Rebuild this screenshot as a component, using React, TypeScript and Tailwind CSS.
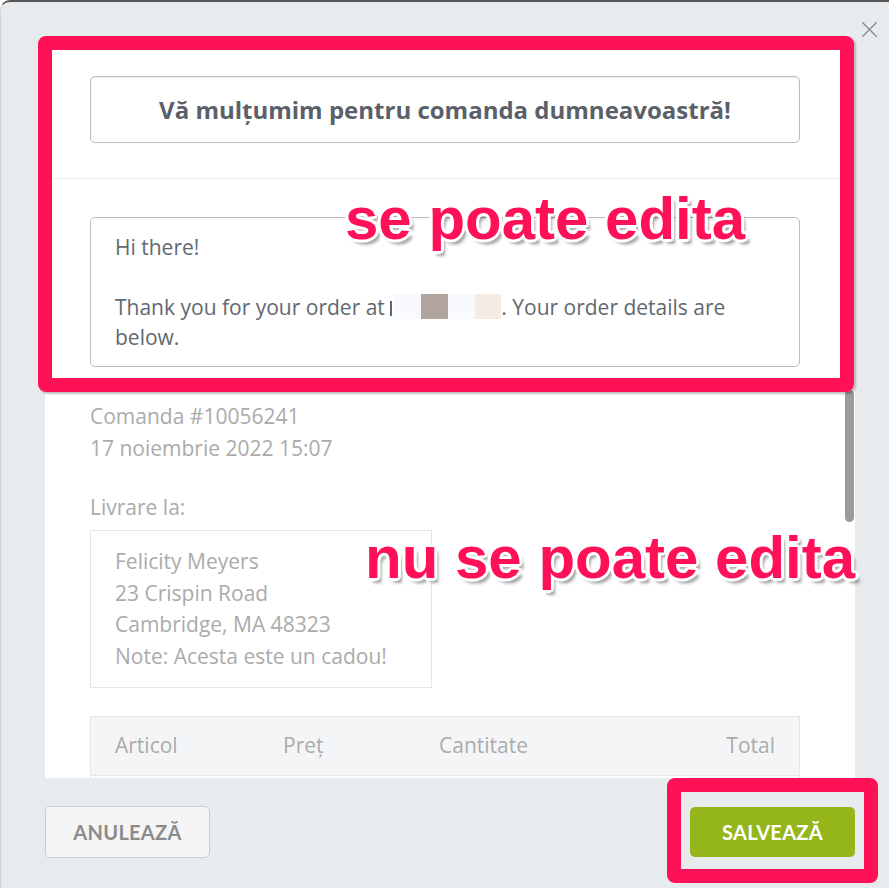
import { X } from 'lucide-react'

const outline =
  '[text-shadow:0_0_1px_#fff,3px_0_0_#fff,-3px_0_0_#fff,0_3px_0_#fff,0_-3px_0_#fff,2px_2px_0_#fff,-2px_2px_0_#fff,2px_-2px_0_#fff,-2px_-2px_0_#fff,4px_5px_3px_rgba(0,0,0,0.35)]'

export default function App() {
  return (
    <div className="w-[889px] h-[888px] bg-white overflow-hidden">
      <div className="relative h-full rounded-tl-[10px] border-t-2 border-l border-t-[#555] border-l-[#cfd3d7] bg-[#e8ebee] pt-[43px] font-['Open_Sans',sans-serif]">
        <button className="absolute right-[6px] top-[14px] text-[#8a8a8a]">
          <X size={27} strokeWidth={1.2} />
        </button>

        {/* scrollable body */}
        <div className="ml-[44px] w-[810px] h-[733px] bg-white flex overflow-hidden">
          <div className="flex-1">
            <div className="px-[45px] pt-[31px] pb-[35px] border-b border-[#ececec]">
              <div className="h-[67px] rounded-[5px] border border-[#bdbdbd] shadow-[inset_0_1px_2px_rgba(0,0,0,0.08)] flex items-center justify-center text-[24px] font-bold text-[#5a6069]">
                Vă mulțumim pentru comanda dumneavoastră!
              </div>
            </div>

            <div className="px-[45px] pt-[38px]">
              <div className="h-[150px] rounded-[5px] border border-[#bdbdbd] px-[24px] pt-[14px] text-[21px] leading-[30px] text-[#626870]">
                <p>Hi there!</p>
                <p>&nbsp;</p>
                <p>
                  Thank you for your order at{' '}
                  <span className="inline-block w-[2px] h-[15px] mr-[1px] align-[-1px] bg-[#626870]" />
                  <span className="inline-block w-[28px] h-[25px] align-[-4px] bg-[#f8fafd]" />
                  <span className="inline-block w-[27px] h-[25px] align-[-4px] bg-[#b2a59e]" />
                  <span className="inline-block w-[27px] h-[25px] align-[-4px] bg-[#f8fafd]" />
                  <span className="inline-block w-[26px] h-[25px] align-[-4px] bg-[#f4ebe5]" />. Your order
                  details are below.
                </p>
              </div>

              <div className="mt-[33px] text-[21px] leading-[32px] text-[#ababab]">
                <p>Comanda #10056241</p>
                <p>17 noiembrie 2022 15:07</p>
                <p className="mt-[27px]">Livrare la:</p>
              </div>

              <div className="mt-[7px] w-[342px] border border-[#e6e6e6] px-[24px] pt-[15px] pb-[14px] text-[21px] leading-[31.7px] text-[#ababab]">
                <p>Felicity Meyers</p>
                <p>23 Crispin Road</p>
                <p>Cambridge, MA 48323</p>
                <p>Note: Acesta este un cadou!</p>
              </div>

              <div className="mt-[28px] border border-[#e6e6e6] text-[21px] text-[#ababab]">
                <div className="h-[59px] bg-[#f4f5f7] border-b border-[#e6e6e6] flex items-center pl-[24px] pr-[24px]">
                  <div className="w-[168px]">Articol</div>
                  <div className="w-[156px]">Preț</div>
                  <div className="flex-1">Cantitate</div>
                  <div>Total</div>
                </div>
                <div className="h-[60px]" />
              </div>
            </div>
          </div>
          <div className="w-[10px] shrink-0">
            <div className="mt-[345px] h-[132px] w-[9px] rounded-full bg-[#9b9b9b]" />
          </div>
        </div>

        {/* footer */}
        <div className="mt-[28px] pl-[44px] pr-[34px] flex items-center justify-between font-['Lato',sans-serif]">
          <button className="w-[165px] h-[52px] rounded-[5px] border border-[#cccccc] bg-[#f5f5f5] text-[20px] font-bold text-[#8b8b8b] tracking-[0.3px]">
            ANULEAZĂ
          </button>
          <button className="w-[165px] h-[50px] rounded-[5px] bg-[#94b61b] text-[20px] font-bold text-white tracking-[0.3px]">
            SALVEAZĂ
          </button>
        </div>

        {/* annotations */}
        <div className="pointer-events-none absolute left-[37px] top-[34px] w-[816px] h-[356px] rounded-[8px] border-[14px] border-[#ff1158] shadow-[2px_2px_2px_rgba(0,0,0,0.25)]" />
        <div className="pointer-events-none absolute left-[666px] top-[776px] w-[211px] h-[105px] rounded-[8px] border-[14px] border-[#ff1158]" />
        <div
          className={`pointer-events-none absolute left-[344px] top-[187px] font-['Liberation_Sans',Arial,sans-serif] font-bold text-[60px] leading-none text-[#ff1158] ${outline}`}
        >
          se poate edita
        </div>
        <div
          className={`pointer-events-none absolute left-[364px] top-[526px] font-['Liberation_Sans',Arial,sans-serif] font-bold text-[60px] leading-none text-[#ff1158] ${outline}`}
        >
          nu se poate edita
        </div>
      </div>
    </div>
  )
}
